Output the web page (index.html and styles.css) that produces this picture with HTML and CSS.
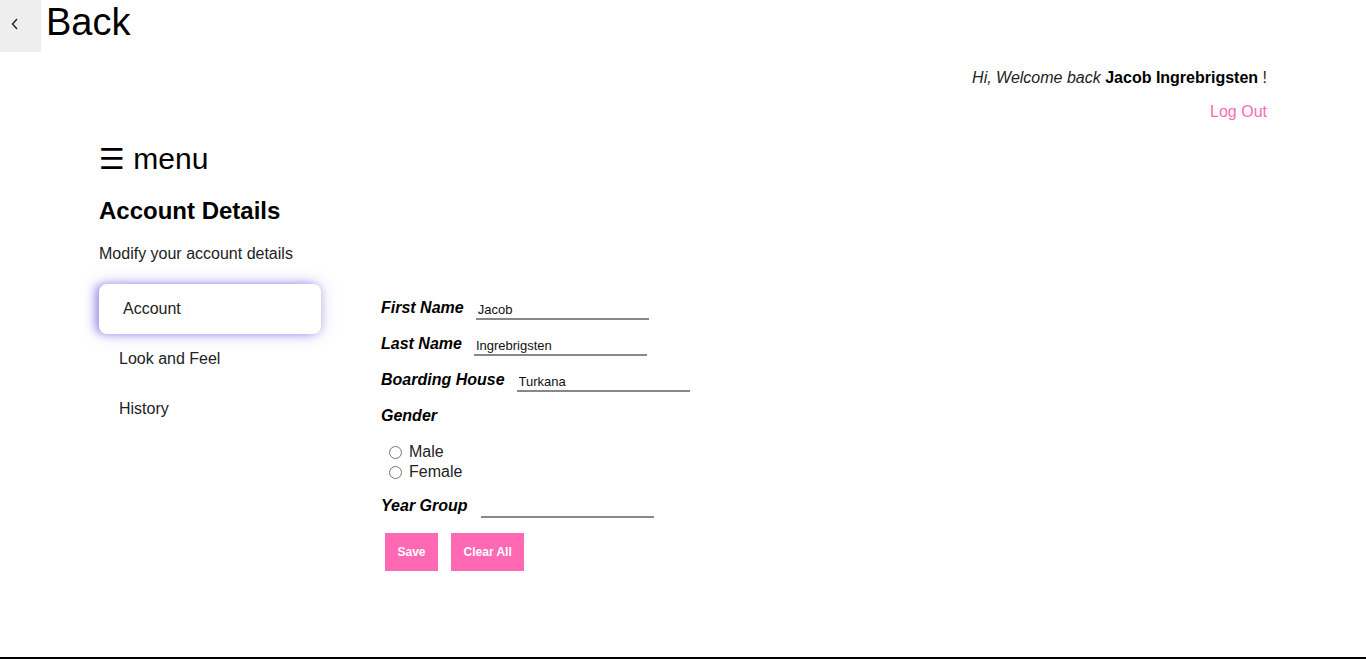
FILE: index.html
```html
<!DOCTYPE html>
<html>
<head>
<meta charset="utf-8">
<title>Account Details</title>
<link rel="stylesheet" href="styles.css">
</head>
<body>
<div class="page">
  <header class="topbar">
    <button class="back-btn" aria-label="Back">
      <svg width="8" height="12" viewBox="0 0 8 12"><polyline points="6,1 1.5,6 6,11" fill="none" stroke="#222" stroke-width="1.4"/></svg>
    </button>
    <span class="back-text">Back</span>
  </header>

  <div class="welcome">
    <p class="greeting"><em>Hi, Welcome back</em> <strong>Jacob Ingrebrigsten</strong> !</p>
    <a class="logout" href="#">Log Out</a>
  </div>

  <main class="content">
    <div class="menu-toggle"><span class="burger">☰</span> menu</div>
    <h2 class="title">Account Details</h2>
    <p class="subtitle">Modify your account details</p>

    <div class="settings">
      <nav class="side">
        <div class="side-item active">Account</div>
        <div class="side-item">Look and Feel</div>
        <div class="side-item">History</div>
      </nav>

      <form class="form">
        <div class="row">
          <label class="lbl">First Name</label>
          <input class="field" type="text" value="Jacob">
        </div>
        <div class="row">
          <label class="lbl">Last Name</label>
          <input class="field" type="text" value="Ingrebrigsten">
        </div>
        <div class="row">
          <label class="lbl">Boarding House</label>
          <input class="field" type="text" value="Turkana">
        </div>
        <div class="row">
          <label class="lbl">Gender</label>
        </div>
        <div class="radios">
          <label class="radio"><input type="radio" name="g">Male</label>
          <label class="radio"><input type="radio" name="g">Female</label>
        </div>
        <div class="row year">
          <label class="lbl">Year Group</label>
          <input class="field" type="text" value="">
        </div>
        <div class="buttons">
          <button type="button" class="btn">Save</button>
          <button type="button" class="btn">Clear All</button>
        </div>
      </form>
    </div>
  </main>
</div>
</body>
</html>
```

FILE: styles.css
```css
* { box-sizing: border-box; }
html, body { margin: 0; padding: 0; }
body {
  font-family: "Liberation Sans", Arial, sans-serif;
  color: #000;
  background: #fff;
}
.page {
  height: 659px;
  border-bottom: 2px solid #000;
  overflow: hidden;
}
.topbar {
  display: flex;
  align-items: flex-start;
  height: 52px;
}
.back-btn {
  width: 41px;
  height: 52px;
  border: 0;
  background: #eeeeee;
  display: flex;
  align-items: center;
  justify-content: center;
  padding: 0 12px 4px 0;
  margin: 0;
}
.back-text {
  font-size: 38px;
  line-height: 44px;
  margin-left: 5px;
}
.welcome {
  display: flex;
  flex-direction: column;
  align-items: flex-end;
  padding-right: 99px;
}
.greeting {
  margin: 16px 0 0;
  font-size: 16px;
  line-height: 20px;
  color: #222;
}
.greeting em { color: #222; }
.greeting strong { color: #000; }
.logout {
  margin-top: 14px;
  font-size: 16px;
  line-height: 20px;
  color: #ff69b4;
  text-decoration: none;
}
.content {
  padding-left: 99px;
}
.menu-toggle {
  margin-top: 20px;
  font-size: 30px;
  line-height: 34px;
}
.burger { font-family: "DejaVu Sans", sans-serif; font-size: 29px; }
.title {
  margin: 21px 0 0;
  font-size: 24px;
  line-height: 28px;
  font-weight: bold;
}
.subtitle {
  margin: 19px 0 0;
  font-size: 16px;
  line-height: 20px;
  color: #222;
}
.settings {
  display: flex;
  margin-top: 20px;
}
.side {
  width: 222px;
  display: flex;
  flex-direction: column;
}
.side-item {
  height: 50px;
  display: flex;
  align-items: center;
  padding-left: 20px;
  font-size: 16px;
  color: #222;
}
.side-item.active {
  padding-left: 24px;
  border-radius: 8px;
  background: #fff;
  box-shadow: -4px 0 8px rgba(100, 90, 225, 0.55), 0 0 18px rgba(150, 140, 235, 0.4), 3px 0 6px rgba(0,0,0,0.05);
}
.form {
  margin-left: 60px;
  padding-top: 14px;
  display: flex;
  flex-direction: column;
}
.row {
  display: flex;
  align-items: flex-end;
  height: 36px;
  gap: 12px;
}
.row:first-child { height: 20px; }
.lbl {
  font-size: 16px;
  line-height: 20px;
  font-weight: bold;
  font-style: italic;
}
.field {
  width: 173px;
  height: 20px;
  font-family: "Liberation Sans", Arial, sans-serif;
  font-size: 13px;
  border: 0;
  border-bottom: 2px solid #888;
  padding: 0 2px;
  margin-bottom: -2px;
  outline: none;
  background: transparent;
  color: #111;
}
.radios {
  display: flex;
  flex-direction: column;
  padding-top: 16px;
  padding-left: 3px;
}
.radio {
  display: flex;
  align-items: center;
  font-size: 16px;
  line-height: 20px;
  color: #222;
}
.radio input {
  width: 13px;
  height: 13px;
  margin: 0 7px 0 5px;
}
.row.year { height: 34px; gap: 13px; }
.buttons {
  display: flex;
  gap: 13px;
  padding-left: 4px;
  margin-top: 17px;
}
.btn {
  height: 38px;
  padding: 0 12.5px;
  border: 0;
  background: #ff69b4;
  color: #fff;
  font-family: "Liberation Sans", Arial, sans-serif;
  font-weight: bold;
  font-size: 12px;
}
```
